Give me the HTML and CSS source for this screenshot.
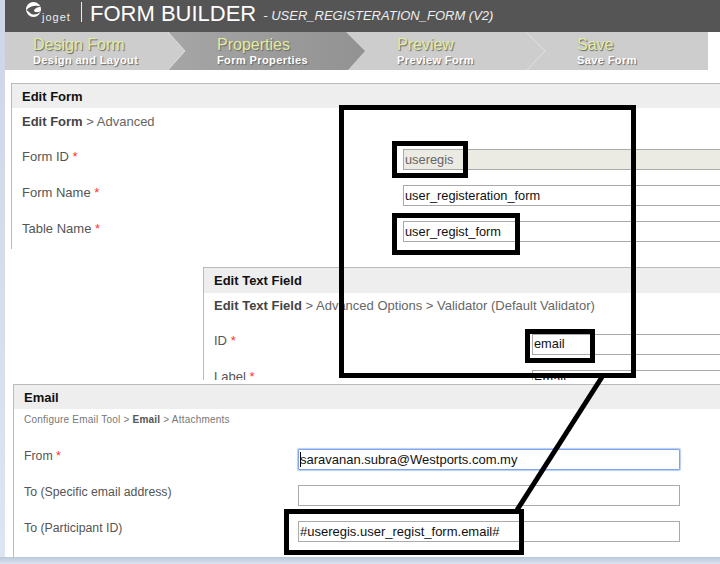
FILE: index.html
```html
<!DOCTYPE html>
<html lang="en">
<head>
<meta charset="utf-8">
<title>Form Builder</title>
<link rel="stylesheet" href="styles.css">
</head>
<body>
<div class="shot">
  <header class="topbar">
    <div class="logo">
      <svg class="logo-mark" width="17" height="15" viewBox="0 0 17 15"><circle cx="8.5" cy="7.5" r="7.500" fill="#fff"/><path d="M1.500 8 C6 3 11 3 16.500 4.500 C12 5 9 7 9 9 C11 11 14 10 16 9 C13 13 8 13.500 5 11 C4 10 3 9 1.500 8Z" fill="#555"/></svg>
      <span class="logo-text">joget</span>
    </div>
    <h1 class="title">FORM BUILDER</h1>
    <span class="subtitle">- USER_REGISTERATION_FORM (V2)</span>
  </header>
  <nav class="steps">
    <svg class="steps-art" width="703" height="38" viewBox="0 0 703 38">
      <defs><linearGradient id="dark" x1="0" y1="0" x2="1" y2="0"><stop offset="0" stop-color="#a6a6a6"/><stop offset="1" stop-color="#929292"/></linearGradient></defs>
      <polygon points="163,0 341,0 360,19 343,38 163,38 180,19" fill="url(#dark)"/>
      <polyline points="163,0 180,19 163,38" fill="none" stroke="#dcdcdc"/>
      <polyline points="521,0 540,19 522,38" fill="none" stroke="#e2e2e2"/>
    </svg>
    <div class="step"><div class="step-name">Design Form</div><div class="step-desc">Design and Layout</div></div>
    <div class="step"><div class="step-name">Properties</div><div class="step-desc">Form Properties</div></div>
    <div class="step"><div class="step-name">Preview</div><div class="step-desc">Preview Form</div></div>
    <div class="step"><div class="step-name">Save</div><div class="step-desc">Save Form</div></div>
  </nav>

  <section class="panel panel-form">
    <h2 class="panel-head">Edit Form</h2>
    <p class="crumbs"><b>Edit Form</b> &gt; Advanced</p>
    <div class="rows rows-form">
      <div class="row"><div class="label">Form ID <span class="req">*</span></div><div class="field field-off">useregis</div></div>
      <div class="row"><div class="label">Form Name <span class="req">*</span></div><div class="field">user_registeration_form</div></div>
      <div class="row"><div class="label">Table Name <span class="req">*</span></div><div class="field">user_regist_form</div></div>
    </div>
  </section>

  <section class="panel panel-field">
    <h2 class="panel-head">Edit Text Field</h2>
    <p class="crumbs"><b>Edit Text Field</b> &gt; Advanced Options &gt; Validator (Default Validator)</p>
    <div class="rows rows-field">
      <div class="row"><div class="label">ID <span class="req">*</span></div><div class="field">email</div></div>
      <div class="row"><div class="label">Label <span class="req">*</span></div><div class="field">Email</div></div>
    </div>
  </section>

  <section class="panel panel-email">
    <h2 class="panel-head">Email</h2>
    <p class="crumbs crumbs-small">Configure Email Tool &gt; <b>Email</b> &gt; Attachments</p>
    <div class="rows rows-email">
      <div class="row"><div class="label">From <span class="req">*</span></div><div class="field field-focus">saravanan.subra@Westports.com.my</div></div>
      <div class="row"><div class="label">To (Specific email address)</div><div class="field"></div></div>
      <div class="row"><div class="label">To (Participant ID)</div><div class="field">#useregis.user_regist_form.email#</div></div>
    </div>
  </section>

  <svg class="marks" width="720" height="564" viewBox="0 0 720 564">
    <g fill="none" stroke="#000" stroke-width="5">
      <rect x="341.500" y="107.500" width="292" height="268"/>
      <rect x="394.500" y="143.500" width="71" height="32"/>
      <rect x="394.500" y="215.500" width="123" height="37"/>
      <rect x="527.500" y="331.500" width="65" height="29"/>
      <rect x="286.500" y="511.500" width="235" height="41"/>
      <line x1="602" y1="377" x2="517" y2="510"/>
    </g>
  </svg>
  <div class="handle"></div>
</div>
</body>
</html>
```
FILE: styles.css
```css
* { box-sizing: border-box; }
html, body { margin: 0; padding: 0; }
body { font-family: "Liberation Sans", Arial, sans-serif; background: #fff; }
.shot {
  position: relative;
  width: 720px;
  height: 564px;
  overflow: hidden;
  padding-left: 5px;
  background: linear-gradient(#ccd6e7, #dde5f0);
}
.shot::before {
  content: "";
  position: absolute;
  left: 5px; right: 0; top: 0; height: 557px;
  background: #fff;
}
.shot::after {
  content: "";
  position: absolute;
  left: 0; right: 0; top: 557px; height: 7px;
  background: linear-gradient(#bcc8da, #dbe3ee);
}
.topbar {
  position: relative;
  display: flex;
  align-items: flex-start;
  height: 32px;
  background: #555;
  color: #fff;
}
.logo {
  position: relative;
  width: 77px;
  height: 20px;
  margin-top: 2px;
  border-right: 1px solid #eee;
}
.logo-mark { position: absolute; left: 20px; top: 0; }
.logo-text { position: absolute; left: 37px; top: 9px; font-size: 11px; letter-spacing: 1px; line-height: 13px; color: #eee; }
.title { margin: 0 0 0 8px; font-size: 22px; font-weight: 400; line-height: 28px; }
.subtitle { margin: 7px 0 0 7px; font-size: 13px; font-style: italic; line-height: 17px; color: #eee; }
.steps {
  position: relative;
  display: grid;
  grid-template-columns: 184px 180px 180px 1fr;
  width: 703px;
  height: 38px;
  background: #cdcdcd;
}
.steps-art { position: absolute; left: 0; top: 0; }
.step { position: relative; padding: 3px 0 0 28px; text-shadow: 1px 1px 1px #666; }
.step-name { font-size: 16px; line-height: 19px; color: #e2eca0; }
.step-desc { font-size: 11px; font-weight: 700; letter-spacing: .4px; line-height: 13px; color: #fff; }
.panel {
  position: absolute;
  right: 0;
  overflow: hidden;
  background: #fff;
  border-top: 1px solid #bbb;
  border-left: 1px solid #bbb;
  color: #555;
}
.panel-form { left: 11px; top: 83px; height: 166px; }
.panel-field { left: 203px; top: 267px; height: 113px; }
.panel-email { left: 13px; top: 384px; height: 173px; }
.panel-head {
  margin: 0;
  height: 24px;
  padding-left: 10px;
  background: #eee;
  color: #111;
  font-size: 13px;
  font-weight: 700;
  line-height: 25px;
}
.panel-field .panel-head { height: 25px; }
.crumbs { margin: 5px 0 0; padding-left: 10px; font-size: 13px; line-height: 15px; color: #666; }
.panel-form .crumbs { margin-top: 6px; }
.crumbs b { color: #444; }
.crumbs-small { margin-top: 4px; font-size: 10px; letter-spacing: .22px; line-height: 13px; color: #777; }
.crumbs-small b { color: #555; }
.rows { display: flex; flex-direction: column; gap: 15px; }
.rows-form { padding-top: 20px; }
.rows-field { padding-top: 21px; }
.rows-email { padding-top: 23px; }
.row { display: flex; height: 21px; }
.label { flex: none; padding-left: 10px; font-size: 12.300px; line-height: 14px; color: #555; }
.rows-form .label { width: 391px; padding-top: 1px; font-size: 13px; }
.rows-field .label { width: 328px; font-size: 13px; }
.rows-email .label { width: 284px; }
.req { color: #f33; }
.field {
  position: relative;
  flex: none;
  width: 400px;
  height: 21px;
  padding-left: 1px;
  background: #fff;
  border: 1px solid #aaa;
  color: #111;
  font-size: 12.800px;
  line-height: 20px;
}
.rows-field .field { line-height: 18px; }
.rows-email .field { width: 382px; font-size: 13px; }
.field-off { background: #ebebe4; color: #666; }
.field-focus { border-color: #7fa6ea; border-radius: 1px; box-shadow: 0 0 1px 1px #b5cdf3; }
.field-focus::before {
  content: "";
  position: absolute;
  left: 1px; top: 2px;
  width: 1px; height: 15px;
  background: #000;
}
.marks { position: absolute; left: 0; top: 0; pointer-events: none; }
.handle {
  position: absolute;
  left: 512px; top: 557px;
  width: 5px; height: 5px;
  background: #fff;
  border: 1px solid #333;
}
```
